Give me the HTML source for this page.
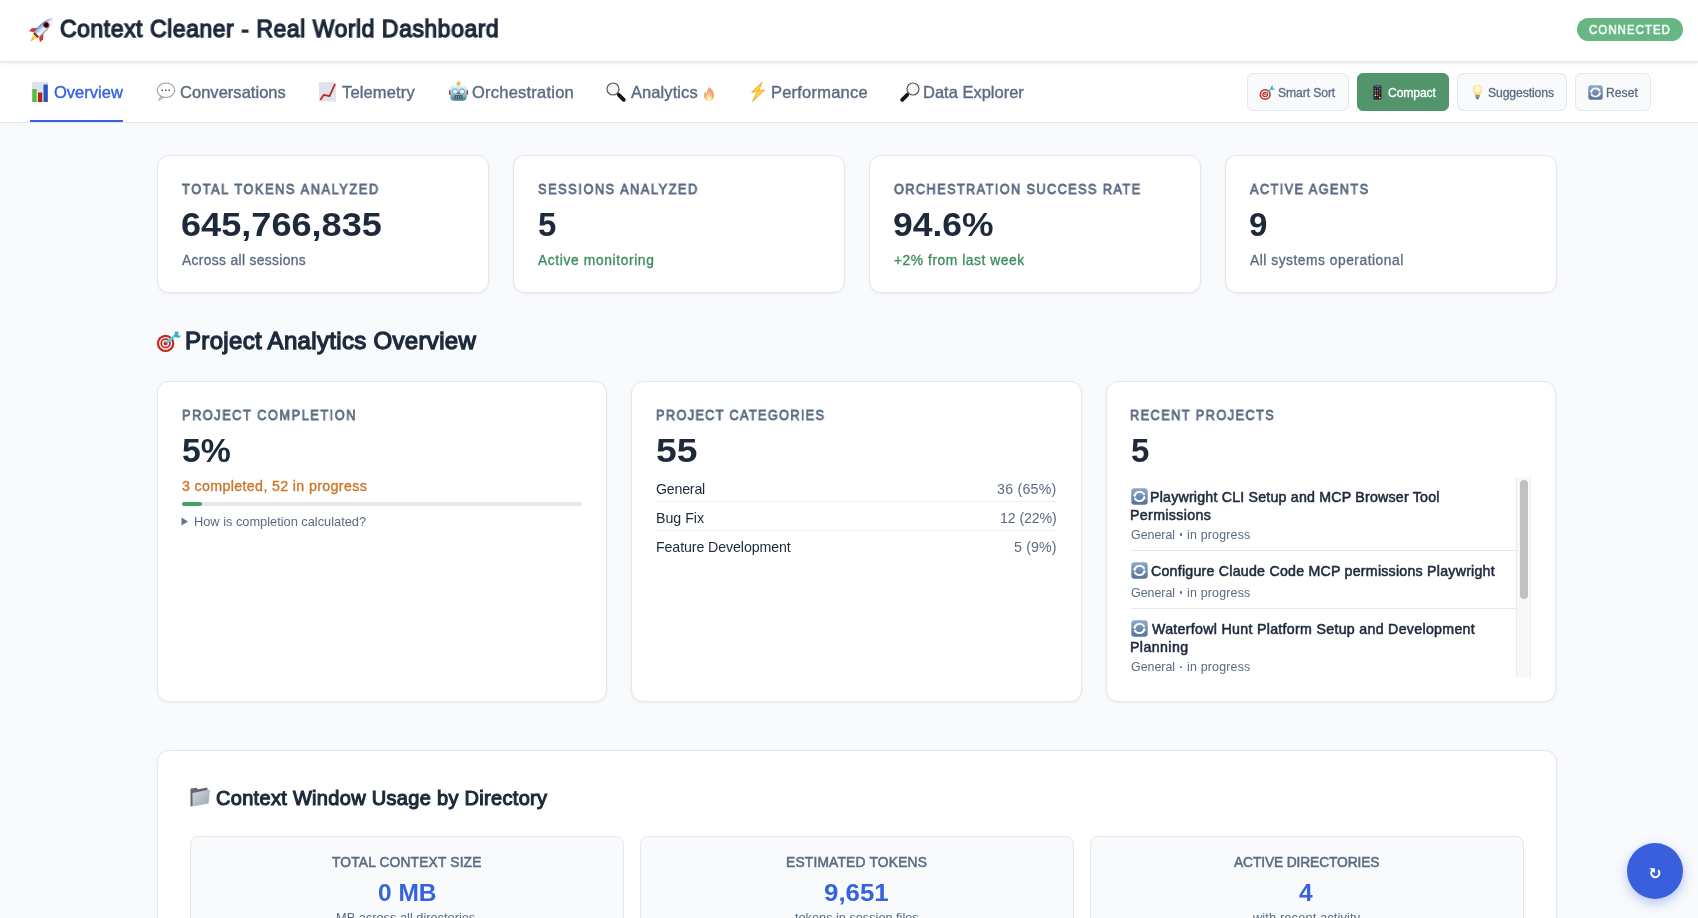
<!DOCTYPE html>
<html>
<head>
<meta charset="utf-8">
<title>Context Cleaner - Real World Dashboard</title>
<style>
html,body{margin:0;padding:0;}
body{width:1698px;height:918px;overflow:hidden;position:relative;background:#f8fafc;font-family:"Liberation Sans",sans-serif;}
.t{position:absolute;white-space:nowrap;will-change:transform;}
.abs{position:absolute;box-sizing:border-box;}
.header{left:0;top:0;width:1698px;height:62px;background:#fff;border-bottom:1px solid #e2e8f0;box-shadow:0 1px 3px rgba(0,0,0,0.1);}
.nav{left:0;top:62px;width:1698px;height:61px;background:#fff;border-bottom:1px solid #e2e8f0;}
.underline{left:30px;top:120px;width:93px;height:2px;background:#3563e0;}
.badge{left:1577px;top:18px;width:106px;height:23px;border-radius:12px;background:#68b684;}
.btn{top:73px;height:38px;border:1px solid #e2e8f0;border-radius:6px;background:#f8fafc;}
.btn.green{background:#52956b;border-color:#52956b;}
.card{background:#fff;border:1px solid #e2e8f0;border-radius:12px;box-shadow:0 1px 3px rgba(0,0,0,0.06);}
.track{left:182px;top:502px;width:400px;height:4px;border-radius:2px;background:#e5e7eb;}
.fill{left:182px;top:502px;width:20px;height:4px;border-radius:2px;background:#4a9a6a;}
.sep{height:1px;background:#edf0f4;}
.isep{left:1131px;width:385px;height:1px;background:#e2e8f0;}
.sb-track{left:1516px;top:477px;width:15px;height:200px;background:#f8f8f8;border-left:1px solid #ececec;border-right:1px solid #ececec;}
.sb-thumb{left:1520px;top:480px;width:8px;height:119px;border-radius:4px;background:#c1c1c1;}
.inner{top:836px;width:434px;height:120px;background:#f8fafc;border:1px solid #e2e8f0;border-radius:8px;}
.fab{left:1627px;top:843px;width:56px;height:56px;border-radius:50%;background:#3a5fdd;box-shadow:0 4px 12px rgba(58,95,221,0.35);}
svg{position:absolute;overflow:visible;}
</style>
</head>
<body>
<div class="abs nav"></div>
<div class="abs header"></div>
<div class="abs underline"></div>
<div class="abs badge"></div>

<div class="abs btn" style="left:1247px;width:102px;"></div>
<div class="abs btn green" style="left:1357px;width:92px;"></div>
<div class="abs btn" style="left:1457px;width:110px;"></div>
<div class="abs btn" style="left:1575px;width:76px;"></div>

<!-- stat cards -->
<div class="abs card" style="left:157px;top:155px;width:332px;height:138px;"></div>
<div class="abs card" style="left:513px;top:155px;width:332px;height:138px;"></div>
<div class="abs card" style="left:869px;top:155px;width:332px;height:138px;"></div>
<div class="abs card" style="left:1225px;top:155px;width:332px;height:138px;"></div>

<!-- project cards -->
<div class="abs card" style="left:157px;top:381px;width:450px;height:321px;"></div>
<div class="abs card" style="left:631px;top:381px;width:451px;height:321px;"></div>
<div class="abs card" style="left:1106px;top:381px;width:450px;height:321px;"></div>

<div class="abs track"></div>
<div class="abs fill"></div>
<svg style="left:181px;top:517px" width="8" height="9" viewBox="0 0 8 9"><path d="M0.5 0.5 L7 4.5 L0.5 8.5 Z" fill="#64748b"/></svg>

<div class="abs sep" style="left:656px;top:501px;width:401px;"></div>
<div class="abs sep" style="left:656px;top:530px;width:401px;"></div>

<div class="abs isep" style="top:550px;"></div>
<div class="abs isep" style="top:608px;"></div>
<div class="abs sb-track"></div>
<div class="abs sb-thumb"></div>

<!-- context section -->
<div class="abs card" style="left:157px;top:750px;width:1400px;height:300px;"></div>
<div class="abs inner" style="left:190px;"></div>
<div class="abs inner" style="left:640px;"></div>
<div class="abs inner" style="left:1090px;"></div>

<div class="abs fab"></div>

<!-- icons -->
<svg width="0" height="0" style="position:absolute">
  <defs>
    <linearGradient id="gBody" x1="0" y1="0" x2="1" y2="0">
      <stop offset="0" stop-color="#5d8fd0"/><stop offset="0.45" stop-color="#cfe2f5"/><stop offset="0.75" stop-color="#f4f7fa"/><stop offset="1" stop-color="#7b8796"/>
    </linearGradient>
    <linearGradient id="gFlame" x1="0" y1="0" x2="0" y2="1">
      <stop offset="0" stop-color="#fff36b"/><stop offset="1" stop-color="#f59a1b"/>
    </linearGradient>
    <linearGradient id="gReset" x1="0" y1="0" x2="0" y2="1">
      <stop offset="0" stop-color="#8eabc9"/><stop offset="0.5" stop-color="#6f8db0"/><stop offset="1" stop-color="#54739a"/>
    </linearGradient>
    <linearGradient id="gRobot" x1="0" y1="0" x2="0" y2="1">
      <stop offset="0" stop-color="#eef8fa"/><stop offset="0.5" stop-color="#a9cbd6"/><stop offset="1" stop-color="#3f7d91"/>
    </linearGradient>
    <linearGradient id="gFire" x1="0" y1="0" x2="0" y2="1">
      <stop offset="0" stop-color="#f29a8a"/><stop offset="1" stop-color="#f7b36a"/>
    </linearGradient>
    <radialGradient id="gFireIn" cx="0.5" cy="0.85" r="0.6">
      <stop offset="0" stop-color="#fffbe0"/><stop offset="0.6" stop-color="#fbe39a"/><stop offset="1" stop-color="#f6c98a"/>
    </radialGradient>
    <radialGradient id="gBulb" cx="0.5" cy="0.4" r="0.55">
      <stop offset="0" stop-color="#fffdf2"/><stop offset="0.6" stop-color="#fdf1b8"/><stop offset="1" stop-color="#f4d66a"/>
    </radialGradient>
    <linearGradient id="gFolder" x1="0" y1="0" x2="1" y2="1">
      <stop offset="0" stop-color="#d3d8de"/><stop offset="1" stop-color="#9ea5ae"/>
    </linearGradient>
    <symbol id="reset" viewBox="0 0 17 17">
      <rect x="0.3" y="0.3" width="16.4" height="16.4" rx="3.2" fill="url(#gReset)"/>
      <path d="M3.6 8.3 C4 5.2 6 3.9 8.6 3.9 C10.8 3.9 12.6 5 13.3 7" fill="none" stroke="#fff" stroke-width="1.9"/>
      <path d="M2.2 6.2 L5.6 6.2 L3.4 9.6 Z" fill="#fff"/>
      <path d="M13.4 8.7 C13 11.8 11 13.1 8.4 13.1 C6.2 13.1 4.4 12 3.7 10" fill="none" stroke="#fff" stroke-width="1.9"/>
      <path d="M14.8 10.8 L11.4 10.8 L13.6 7.4 Z" fill="#fff"/>
    </symbol>
  </defs>
</svg>
<!-- rocket -->
<svg style="left:30px;top:17px" width="24" height="24" viewBox="0 0 24 24">
  <g transform="translate(12.6 11.6) rotate(45) scale(1.14)">
    <path d="M-2.8 8 L2.8 8 L0.4 15.5 Z" fill="url(#gFlame)"/>
    <path d="M-3.2 2 L-7 6.5 L-6.8 10 L-3 7.5 Z" fill="#e0312d"/>
    <path d="M3.2 2 L7 6.5 L6.8 10 L3 7.5 Z" fill="#e0312d"/>
    <path d="M0 -13 C4 -9 4.3 -2 3.4 8 L-3.4 8 C-4.3 -2 -4 -9 0 -13 Z" fill="url(#gBody)"/>
    <rect x="-2.6" y="7.2" width="5.2" height="1.8" fill="#8a2a22"/>
    <circle cx="0" cy="-4.5" r="2.4" fill="#111" stroke="#d33" stroke-width="0.7"/>
  </g>
</svg>
<!-- bar chart -->
<svg style="left:32px;top:82px" width="16" height="20" viewBox="0 0 16 20">
  <rect x="0" y="0" width="16" height="20" fill="#dde3ec"/>
  <rect x="0.3" y="7" width="4.3" height="13" fill="#5cb93a"/>
  <rect x="6" y="10.5" width="4.2" height="9.5" fill="#b3251b"/>
  <rect x="11.5" y="2.5" width="4.3" height="17.5" fill="#2a55bd"/>
</svg>
<!-- speech bubble -->
<svg style="left:156px;top:82px" width="20" height="20" viewBox="0 0 20 20">
  <path d="M4.5 13 L1.5 19.8 L9.5 15 Z" fill="#bfbfbf"/>
  <ellipse cx="10" cy="8.3" rx="9.2" ry="7.8" fill="#9c9c9c"/>
  <ellipse cx="10" cy="8.3" rx="8.1" ry="6.8" fill="#ffffff"/>
  <rect x="5.5" y="7.5" width="1.5" height="1.5" fill="#555"/><rect x="9" y="7.5" width="1.5" height="1.5" fill="#555"/><rect x="12.5" y="7.5" width="1.5" height="1.5" fill="#555"/>
</svg>
<!-- chart increasing -->
<svg style="left:319px;top:82px" width="17" height="20" viewBox="0 0 17 20">
  <rect x="0" y="0" width="17" height="19.5" fill="#dfe3ea"/>
  <path d="M1.3 18 L4.8 12.8 L10.5 14.2 L16 2" fill="none" stroke="#c0281e" stroke-width="1.8" stroke-linejoin="round"/>
</svg>
<!-- robot -->
<svg style="left:449px;top:81px" width="19" height="20" viewBox="0 0 19 20">
  <circle cx="9.5" cy="2.3" r="1.9" fill="#f6b61e"/>
  <path d="M7.6 4.2 A1.9 1.2 0 0 0 11.4 4.2 Z" fill="#6b3fa0"/>
  <rect x="0" y="9" width="2" height="5" rx="0.8" fill="#b92e2e"/>
  <rect x="17" y="9" width="2" height="5" rx="0.8" fill="#b92e2e"/>
  <rect x="1.3" y="4.2" width="16.4" height="15.5" rx="4" fill="url(#gRobot)"/>
  <circle cx="6" cy="10.5" r="2.6" fill="#e9f6fb" stroke="#3ab2dc" stroke-width="1"/>
  <circle cx="13" cy="10.5" r="2.6" fill="#e9f6fb" stroke="#3ab2dc" stroke-width="1"/>
  <circle cx="9.5" cy="12.2" r="1.2" fill="#e04a3a"/>
  <rect x="5.5" y="14.3" width="8" height="3.2" rx="0.6" fill="#3d4b55"/>
  <circle cx="7.3" cy="15.9" r="0.6" fill="#ddd"/><circle cx="9.5" cy="15.9" r="0.6" fill="#ddd"/><circle cx="11.7" cy="15.9" r="0.6" fill="#ddd"/>
</svg>
<!-- magnifier left -->
<svg style="left:605px;top:81px" width="22" height="22" viewBox="0 0 22 22">
  <path d="M13.8 13.8 L18.8 18.8" stroke="#151515" stroke-width="3.8" stroke-linecap="round"/>
  <circle cx="8" cy="8" r="6" fill="#f6f6f6" stroke="#5a5a5a" stroke-width="1.2"/>
</svg>
<!-- fire -->
<svg style="left:703px;top:86px" width="12" height="15" viewBox="0 0 12 15">
  <path d="M6.3 1 C8 3 11.5 5.5 11.2 9.5 C11 12.5 8.8 14.6 6 14.6 C3 14.6 1 12.5 1 9.7 C1 7.8 1.6 6.5 2.3 5.6 C2.6 6.8 3.3 7.5 4 7.6 C3.8 5 4.8 2.6 6.3 1 Z" fill="url(#gFire)"/>
  <path d="M6 6 C7.8 8 9.2 9.8 9.2 11.6 C9.2 13.4 7.8 14.5 6 14.5 C4.2 14.5 2.8 13.4 2.8 11.6 C2.8 9.8 4.2 8 6 6 Z" fill="url(#gFireIn)"/>
</svg>
<!-- lightning -->
<svg style="left:751px;top:82px" width="15" height="20" viewBox="0 0 15 20">
  <path d="M11 0.3 L0.7 10.3 L6.6 9.3 L1.4 19.6 L13.7 8.1 L7.8 8.6 Z" fill="#fcd54a" stroke="#f0a51c" stroke-width="0.9" stroke-linejoin="round"/>
</svg>
<!-- magnifier right -->
<svg style="left:899px;top:81px" width="22" height="22" viewBox="0 0 22 22">
  <path d="M8.2 13.8 L3.2 18.8" stroke="#151515" stroke-width="3.8" stroke-linecap="round"/>
  <circle cx="14" cy="8" r="6" fill="#f6f6f6" stroke="#5a5a5a" stroke-width="1.2"/>
</svg>
<!-- target small (smart sort) -->
<svg style="left:1259px;top:85px" width="17" height="16" viewBox="0 0 17 16">
  <ellipse cx="6.2" cy="9.4" rx="5.6" ry="5.4" fill="#c22a23"/>
  <ellipse cx="6.2" cy="9.4" rx="4.1" ry="3.9" fill="#f4eeee"/>
  <ellipse cx="6.2" cy="9.4" rx="2.9" ry="2.7" fill="#c22a23"/>
  <ellipse cx="6.2" cy="9.4" rx="1.6" ry="1.5" fill="#f4eeee"/>
  <circle cx="6.2" cy="9.4" r="0.8" fill="#c22a23"/>
  <path d="M7 8.5 L13 3" stroke="#45c2d8" stroke-width="1.6"/>
  <path d="M12 1.5 L14 0.5 L13.5 3.5 L16.5 3.8 L14 5 L12 4 Z" fill="#3aa5b8"/>
</svg>
<!-- phone -->
<svg style="left:1373px;top:85px" width="9" height="15" viewBox="0 0 9 15">
  <rect x="0.4" y="0.4" width="8" height="14" rx="1.2" fill="#111" stroke="#6b5b5b" stroke-width="0.5"/>
  <rect x="1.6" y="3" width="1.5" height="1.5" fill="#2b6fd6"/><rect x="3.8" y="3" width="1.5" height="1.5" fill="#555"/><rect x="6" y="3" width="1.5" height="1.5" fill="#2aa0c0"/>
  <rect x="1.6" y="5.2" width="1.5" height="1.5" fill="#d09a1a"/><rect x="3.8" y="5.2" width="1.5" height="1.5" fill="#999"/><rect x="6" y="5.2" width="1.5" height="1.5" fill="#b03a2a"/>
  <rect x="1.6" y="7.4" width="1.5" height="1.5" fill="#2aa0a0"/><rect x="3.8" y="7.4" width="1.5" height="1.5" fill="#8a2ab0"/><rect x="6" y="7.4" width="1.5" height="1.5" fill="#c0601a"/>
  <rect x="1.6" y="9.6" width="1.5" height="1.5" fill="#ddd"/><rect x="3.8" y="9.6" width="1.5" height="1.5" fill="#c8b020"/><rect x="6" y="9.6" width="1.5" height="1.5" fill="#333"/>
  <rect x="1.6" y="11.8" width="1.5" height="1.5" fill="#2b5fb0"/><rect x="3.8" y="11.8" width="1.5" height="1.5" fill="#a02a2a"/><rect x="6" y="11.8" width="1.5" height="1.5" fill="#eee"/>
  <rect x="1.6" y="1.3" width="5.9" height="1" fill="#9a6ad0"/>
</svg>
<!-- bulb -->
<svg style="left:1472px;top:84px" width="11" height="16" viewBox="0 0 11 16">
  <path d="M5.5 0.8 C8.4 0.8 10.3 2.9 10.3 5.5 C10.3 7.8 8.6 8.9 8 11 L3 11 C2.4 8.9 0.7 7.8 0.7 5.5 C0.7 2.9 2.6 0.8 5.5 0.8 Z" fill="url(#gBulb)"/>
  <path d="M3.2 11 L7.8 11 L7.3 14 L3.7 14 Z" fill="#8d8d8d"/>
  <path d="M4 14 L7 14 L5.5 15.6 Z" fill="#444"/>
</svg>
<!-- reset icon (button) -->
<svg style="left:1588px;top:85px" width="15" height="15"><use href="#reset" width="15" height="15"/></svg>
<!-- target heading -->
<svg style="left:156px;top:330px" width="27" height="24" viewBox="0 0 27 24">
  <ellipse cx="9.6" cy="13.4" rx="8.7" ry="8.6" fill="#bf2620"/>
  <ellipse cx="9.6" cy="13.4" rx="6.6" ry="6.5" fill="#f3eded"/>
  <ellipse cx="9.6" cy="13.4" rx="5.2" ry="5.1" fill="#c52a23"/>
  <ellipse cx="9.6" cy="13.4" rx="3.4" ry="3.3" fill="#f3eded"/>
  <ellipse cx="9.6" cy="13.4" rx="2" ry="1.9" fill="#c52a23"/>
  <path d="M11 12 L20 5" stroke="#56d0e6" stroke-width="2.4" stroke-linecap="round"/>
  <path d="M19 1.5 L22.5 1.8 L22.2 5.5 L25.7 5.8 L22 8 L18.5 6.5 Z" fill="#3fa9bd"/>
</svg>
<!-- reset icons in recent projects -->
<svg style="left:1131px;top:488px" width="17" height="17"><use href="#reset" width="17" height="17"/></svg>
<svg style="left:1131px;top:562px" width="17" height="17"><use href="#reset" width="17" height="17"/></svg>
<svg style="left:1131px;top:620px" width="17" height="17"><use href="#reset" width="17" height="17"/></svg>
<!-- folder -->
<svg style="left:190px;top:787px" width="22" height="20" viewBox="0 0 22 20">
  <path d="M0.5 1.5 L6.5 0.8 L8 2.2 L17.5 0.5 L17.5 16 L0.5 19.5 Z" fill="#5f6873"/>
  <path d="M2.5 6 L20 2.5 L18.5 16.5 L2.5 19.5 Z" fill="url(#gFolder)"/>
</svg>
<!-- fab icon -->
<svg style="left:1645px;top:862px" width="20" height="20" viewBox="0 0 20 20">
  <path d="M7.2 8.6 A4 4 0 1 0 13.1 8.3" fill="none" stroke="#fff" stroke-width="2.1"/>
  <path d="M4.3 6.2 L10 6.2 L10 11.2 Z" fill="#fff"/>
</svg>

<div class="t" style="left:59.62px;top:17px;font-size:24.2px;line-height:24.2px;font-weight:normal;color:#1e293b;letter-spacing:0.575px;-webkit-text-stroke:1.33px #1e293b;transform:scaleX(0.9500);transform-origin:0 0;">Context Cleaner - Real World Dashboard</div>
<div class="t" style="left:1589.48px;top:23px;font-size:13px;line-height:13px;font-weight:normal;color:#ffffff;letter-spacing:1.194px;-webkit-text-stroke:0.49px #ffffff;transform:scaleX(0.8800);transform-origin:0 0;">CONNECTED</div>
<div class="t" style="left:54.11px;top:84px;font-size:16.5px;line-height:16.5px;font-weight:normal;color:#3563e0;letter-spacing:0.012px;-webkit-text-stroke:0.40px #3563e0;">Overview</div>
<div class="t" style="left:179.67px;top:84px;font-size:16.5px;line-height:16.5px;font-weight:normal;color:#5b6b82;letter-spacing:0.028px;-webkit-text-stroke:0.40px #5b6b82;">Conversations</div>
<div class="t" style="left:342.33px;top:84px;font-size:16.5px;line-height:16.5px;font-weight:normal;color:#5b6b82;letter-spacing:0.149px;-webkit-text-stroke:0.40px #5b6b82;">Telemetry</div>
<div class="t" style="left:472.11px;top:84px;font-size:16.5px;line-height:16.5px;font-weight:normal;color:#5b6b82;letter-spacing:0.223px;-webkit-text-stroke:0.40px #5b6b82;">Orchestration</div>
<div class="t" style="left:630.66px;top:84px;font-size:16.5px;line-height:16.5px;font-weight:normal;color:#5b6b82;letter-spacing:0.085px;-webkit-text-stroke:0.40px #5b6b82;">Analytics</div>
<div class="t" style="left:771.24px;top:84px;font-size:16.5px;line-height:16.5px;font-weight:normal;color:#5b6b82;letter-spacing:0.215px;-webkit-text-stroke:0.40px #5b6b82;">Performance</div>
<div class="t" style="left:923.24px;top:84px;font-size:16.5px;line-height:16.5px;font-weight:normal;color:#5b6b82;letter-spacing:-0.004px;-webkit-text-stroke:0.40px #5b6b82;">Data Explorer</div>
<div class="t" style="left:1278.20px;top:87px;font-size:12.2px;line-height:12.2px;font-weight:normal;color:#5b6b82;letter-spacing:-0.115px;-webkit-text-stroke:0.29px #5b6b82;">Smart Sort</div>
<div class="t" style="left:1387.94px;top:87px;font-size:12.2px;line-height:12.2px;font-weight:normal;color:#ffffff;letter-spacing:-0.149px;-webkit-text-stroke:0.29px #ffffff;">Compact</div>
<div class="t" style="left:1488.20px;top:87px;font-size:12.2px;line-height:12.2px;font-weight:normal;color:#5b6b82;letter-spacing:-0.108px;-webkit-text-stroke:0.29px #5b6b82;">Suggestions</div>
<div class="t" style="left:1606.14px;top:87px;font-size:12.2px;line-height:12.2px;font-weight:normal;color:#5b6b82;letter-spacing:0.008px;-webkit-text-stroke:0.29px #5b6b82;">Reset</div>
<div class="t" style="left:182.22px;top:182px;font-size:14.2px;line-height:14.2px;font-weight:normal;color:#5b6b82;letter-spacing:1.762px;-webkit-text-stroke:0.82px #5b6b82;transform:scaleX(0.9000);transform-origin:0 0;">TOTAL TOKENS ANALYZED</div>
<div class="t" style="left:537.64px;top:182px;font-size:14.2px;line-height:14.2px;font-weight:normal;color:#5b6b82;letter-spacing:1.718px;-webkit-text-stroke:0.82px #5b6b82;transform:scaleX(0.9000);transform-origin:0 0;">SESSIONS ANALYZED</div>
<div class="t" style="left:893.90px;top:182px;font-size:14.2px;line-height:14.2px;font-weight:normal;color:#5b6b82;letter-spacing:1.531px;-webkit-text-stroke:0.82px #5b6b82;transform:scaleX(0.9000);transform-origin:0 0;">ORCHESTRATION SUCCESS RATE</div>
<div class="t" style="left:1250.28px;top:182px;font-size:14.2px;line-height:14.2px;font-weight:normal;color:#5b6b82;letter-spacing:1.537px;-webkit-text-stroke:0.82px #5b6b82;transform:scaleX(0.9000);transform-origin:0 0;">ACTIVE AGENTS</div>
<div class="t" style="left:181.15px;top:208px;font-size:33px;line-height:33px;font-weight:bold;color:#1e293b;letter-spacing:0.000px;transform:scaleX(1.0947);transform-origin:0 0;">645,766,835</div>
<div class="t" style="left:537.61px;top:208px;font-size:33px;line-height:33px;font-weight:bold;color:#1e293b;letter-spacing:0.000px;">5</div>
<div class="t" style="left:892.86px;top:208px;font-size:33px;line-height:33px;font-weight:bold;color:#1e293b;letter-spacing:0.000px;transform:scaleX(1.0745);transform-origin:0 0;">94.6%</div>
<div class="t" style="left:1248.85px;top:208px;font-size:33px;line-height:33px;font-weight:bold;color:#1e293b;letter-spacing:0.000px;">9</div>
<div class="t" style="left:182.13px;top:254px;font-size:13.8px;line-height:13.8px;font-weight:normal;color:#5b6b82;letter-spacing:0.358px;-webkit-text-stroke:0.33px #5b6b82;">Across all sessions</div>
<div class="t" style="left:537.93px;top:254px;font-size:13.8px;line-height:13.8px;font-weight:normal;color:#3a8d5f;letter-spacing:0.626px;-webkit-text-stroke:0.33px #3a8d5f;">Active monitoring</div>
<div class="t" style="left:893.61px;top:254px;font-size:13.8px;line-height:13.8px;font-weight:normal;color:#3a8d5f;letter-spacing:0.549px;-webkit-text-stroke:0.33px #3a8d5f;">+2% from last week</div>
<div class="t" style="left:1250.13px;top:254px;font-size:13.8px;line-height:13.8px;font-weight:normal;color:#5b6b82;letter-spacing:0.515px;-webkit-text-stroke:0.33px #5b6b82;">All systems operational</div>
<div class="t" style="left:185.28px;top:329px;font-size:24px;line-height:24px;font-weight:normal;color:#1e293b;letter-spacing:0.321px;-webkit-text-stroke:1.32px #1e293b;">Project Analytics Overview</div>
<div class="t" style="left:181.66px;top:408px;font-size:14.2px;line-height:14.2px;font-weight:normal;color:#5b6b82;letter-spacing:1.705px;-webkit-text-stroke:0.82px #5b6b82;transform:scaleX(0.9000);transform-origin:0 0;">PROJECT COMPLETION</div>
<div class="t" style="left:656.26px;top:408px;font-size:14.2px;line-height:14.2px;font-weight:normal;color:#5b6b82;letter-spacing:1.462px;-webkit-text-stroke:0.82px #5b6b82;transform:scaleX(0.9000);transform-origin:0 0;">PROJECT CATEGORIES</div>
<div class="t" style="left:1130.26px;top:408px;font-size:14.2px;line-height:14.2px;font-weight:normal;color:#5b6b82;letter-spacing:1.576px;-webkit-text-stroke:0.82px #5b6b82;transform:scaleX(0.9000);transform-origin:0 0;">RECENT PROJECTS</div>
<div class="t" style="left:181.69px;top:434px;font-size:33px;line-height:33px;font-weight:bold;color:#1e293b;letter-spacing:0.000px;transform:scaleX(1.0221);transform-origin:0 0;">5%</div>
<div class="t" style="left:656.08px;top:434px;font-size:33px;line-height:33px;font-weight:bold;color:#1e293b;letter-spacing:0.000px;transform:scaleX(1.1286);transform-origin:0 0;">55</div>
<div class="t" style="left:1130.51px;top:434px;font-size:33px;line-height:33px;font-weight:bold;color:#1e293b;letter-spacing:0.000px;">5</div>
<div class="t" style="left:181.94px;top:479px;font-size:14.2px;line-height:14.2px;font-weight:normal;color:#cd7428;letter-spacing:0.372px;-webkit-text-stroke:0.34px #cd7428;">3 completed, 52 in progress</div>
<div class="t" style="left:193.74px;top:516px;font-size:12.8px;line-height:12.8px;font-weight:normal;color:#5b6b82;letter-spacing:-0.002px;">How is completion calculated?</div>
<div class="t" style="left:656.29px;top:482px;font-size:14.2px;line-height:14.2px;font-weight:normal;color:#1e293b;letter-spacing:-0.208px;">General</div>
<div class="t" style="left:997.17px;top:482px;font-size:14.2px;line-height:14.2px;font-weight:normal;color:#5b6b82;letter-spacing:0.238px;">36 (65%)</div>
<div class="t" style="left:655.83px;top:511px;font-size:14.2px;line-height:14.2px;font-weight:normal;color:#1e293b;letter-spacing:0.000px;">Bug Fix</div>
<div class="t" style="left:999.63px;top:511px;font-size:14.2px;line-height:14.2px;font-weight:normal;color:#5b6b82;letter-spacing:-0.114px;">12 (22%)</div>
<div class="t" style="left:655.83px;top:540px;font-size:14.2px;line-height:14.2px;font-weight:normal;color:#1e293b;letter-spacing:-0.092px;">Feature Development</div>
<div class="t" style="left:1013.83px;top:540px;font-size:14.2px;line-height:14.2px;font-weight:normal;color:#5b6b82;letter-spacing:0.160px;">5 (9%)</div>
<div class="t" style="left:1150.40px;top:490px;font-size:14.2px;line-height:14.2px;font-weight:normal;color:#1e293b;letter-spacing:0.211px;-webkit-text-stroke:0.54px #1e293b;">Playwright CLI Setup and MCP Browser Tool</div>
<div class="t" style="left:1130.00px;top:508px;font-size:14.2px;line-height:14.2px;font-weight:normal;color:#1e293b;letter-spacing:0.351px;-webkit-text-stroke:0.54px #1e293b;">Permissions</div>
<div class="t" style="left:1130.58px;top:529px;font-size:12.4px;line-height:12.4px;font-weight:normal;color:#5b6b82;letter-spacing:0.007px;">General</div>
<div class="t" style="left:1186.96px;top:529px;font-size:12.4px;line-height:12.4px;font-weight:normal;color:#5b6b82;letter-spacing:0.192px;">in progress</div>
<div class="t" style="left:1150.86px;top:564px;font-size:14.2px;line-height:14.2px;font-weight:normal;color:#1e293b;letter-spacing:0.238px;-webkit-text-stroke:0.54px #1e293b;">Configure Claude Code MCP permissions Playwright</div>
<div class="t" style="left:1130.58px;top:587px;font-size:12.4px;line-height:12.4px;font-weight:normal;color:#5b6b82;letter-spacing:0.007px;">General</div>
<div class="t" style="left:1186.96px;top:587px;font-size:12.4px;line-height:12.4px;font-weight:normal;color:#5b6b82;letter-spacing:0.192px;">in progress</div>
<div class="t" style="left:1151.50px;top:622px;font-size:14.2px;line-height:14.2px;font-weight:normal;color:#1e293b;letter-spacing:0.304px;-webkit-text-stroke:0.54px #1e293b;">Waterfowl Hunt Platform Setup and Development</div>
<div class="t" style="left:1130.10px;top:640px;font-size:14.2px;line-height:14.2px;font-weight:normal;color:#1e293b;letter-spacing:0.412px;-webkit-text-stroke:0.54px #1e293b;">Planning</div>
<div class="t" style="left:1130.58px;top:661px;font-size:12.4px;line-height:12.4px;font-weight:normal;color:#5b6b82;letter-spacing:0.007px;">General</div>
<div class="t" style="left:1186.96px;top:661px;font-size:12.4px;line-height:12.4px;font-weight:normal;color:#5b6b82;letter-spacing:0.192px;">in progress</div>
<div class="t" style="left:216.45px;top:788px;font-size:20px;line-height:20px;font-weight:normal;color:#1e293b;letter-spacing:0.306px;-webkit-text-stroke:1.10px #1e293b;">Context Window Usage by Directory</div>
<div class="t" style="left:332.15px;top:856px;font-size:13.8px;line-height:13.8px;font-weight:normal;color:#5b6b82;letter-spacing:0.161px;-webkit-text-stroke:0.52px #5b6b82;">TOTAL CONTEXT SIZE</div>
<div class="t" style="left:785.92px;top:856px;font-size:13.8px;line-height:13.8px;font-weight:normal;color:#5b6b82;letter-spacing:0.193px;-webkit-text-stroke:0.52px #5b6b82;">ESTIMATED TOKENS</div>
<div class="t" style="left:1234.03px;top:856px;font-size:13.8px;line-height:13.8px;font-weight:normal;color:#5b6b82;letter-spacing:-0.131px;-webkit-text-stroke:0.52px #5b6b82;">ACTIVE DIRECTORIES</div>
<div class="t" style="left:377.62px;top:881px;font-size:24.5px;line-height:24.5px;font-weight:bold;color:#3563e0;letter-spacing:0.000px;transform:scaleX(0.9952);transform-origin:0 0;">0 MB</div>
<div class="t" style="left:823.79px;top:881px;font-size:24.5px;line-height:24.5px;font-weight:bold;color:#3563e0;letter-spacing:0.000px;transform:scaleX(1.0555);transform-origin:0 0;">9,651</div>
<div class="t" style="left:1298.63px;top:881px;font-size:24.5px;line-height:24.5px;font-weight:bold;color:#3563e0;letter-spacing:0.000px;">4</div>
<div class="t" style="left:336.44px;top:912px;font-size:12.8px;line-height:12.8px;font-weight:normal;color:#5b6b82;letter-spacing:-0.005px;">MB across all directories</div>
<div class="t" style="left:794.51px;top:912px;font-size:12.8px;line-height:12.8px;font-weight:normal;color:#5b6b82;letter-spacing:-0.035px;">tokens in session files</div>
<div class="t" style="left:1252.93px;top:912px;font-size:12.8px;line-height:12.8px;font-weight:normal;color:#5b6b82;letter-spacing:0.133px;">with recent activity</div>
<div class="abs" style="left:1179.6px;top:533.3px;width:2.6px;height:2.6px;border-radius:50%;background:#5b6b82"></div>
<div class="abs" style="left:1179.6px;top:591.2px;width:2.6px;height:2.6px;border-radius:50%;background:#5b6b82"></div>
<div class="abs" style="left:1179.6px;top:665.6px;width:2.6px;height:2.6px;border-radius:50%;background:#5b6b82"></div>
</body>
</html>
